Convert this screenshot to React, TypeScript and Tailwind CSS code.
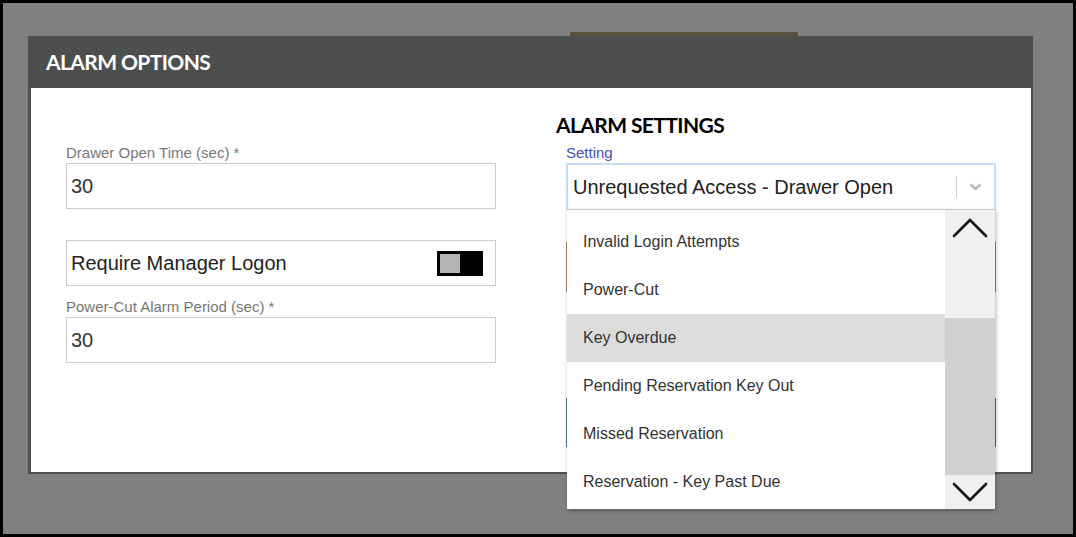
import { useState } from "react";

const SANS = "font-['Liberation_Sans',Arial,sans-serif]";

const OPTIONS = [
  "Invalid Login Attempts",
  "Power-Cut",
  "Key Overdue",
  "Pending Reservation Key Out",
  "Missed Reservation",
  "Reservation - Key Past Due",
];

function Chevron({ up }: { up?: boolean }) {
  return (
    <svg width="36" height="21" viewBox="0 0 36 21" fill="none">
      <polyline
        points={up ? "2,19 18,3 34,19" : "2,2 18,18 34,2"}
        stroke="#111"
        strokeWidth="2.6"
        strokeLinecap="round"
        strokeLinejoin="round"
      />
    </svg>
  );
}

function NumberField({ label, value }: { label: string; value: string }) {
  return (
    <div>
      <div className={`${SANS} text-[15px] leading-[17px] text-[#777]`}>
        {label}
      </div>
      <div
        className={`${SANS} mt-[2px] flex h-[46px] items-center border border-[#cccccc] pl-[4px] text-[20px] text-[#333]`}
      >
        {value}
      </div>
    </div>
  );
}

function SettingSelect() {
  const [hovered] = useState(2);

  return (
    <div className="relative">
      <div
        className={`${SANS} flex h-[48px] items-center border-2 border-[#c6dcf6] bg-white pl-[5px] text-[20px] text-[#222]`}
      >
        <span className="flex-1">Unrequested Access - Drawer Open</span>
        <span className="h-[22px] w-px bg-[#cccccc]" />
        <span className="flex w-[37px] justify-center">
          <svg width="13" height="8" viewBox="0 0 13 8" fill="none">
            <polyline
              points="1.5,1.5 6.5,6 11.5,1.5"
              stroke="#b8b8b8"
              strokeWidth="2.4"
            />
          </svg>
        </span>
      </div>

      {/* open menu, floats over the rest of the modal */}
      <div className="absolute left-[1px] top-[46px] z-10 flex h-[300px] w-[428px] overflow-hidden border-t border-[#cccccc] bg-white shadow-[1px_2px_4px_rgba(0,0,0,0.3)]">
        <ul className="flex-1 pt-[8px]">
          {OPTIONS.map((o, i) => (
            <li
              key={o}
              className={`${SANS} flex h-[48px] items-center pl-[16px] text-[16px] text-[#333] ${
                i === hovered ? "bg-[#dcdcdc]" : ""
              }`}
            >
              {o}
            </li>
          ))}
        </ul>
        <div className="flex w-[50px] flex-col bg-[#f0f0f0]">
          <div className="flex h-[34px] items-center justify-center">
            <Chevron up />
          </div>
          <div className="flex flex-1 flex-col pt-[74px]">
            <div className="flex-1 bg-[#d0d0d0]" />
          </div>
          <div className="flex h-[34px] items-center justify-center">
            <Chevron />
          </div>
        </div>
      </div>
    </div>
  );
}

export default function App() {
  return (
    <div className="h-[537px] w-[1076px] border-[3px] border-black bg-[#808080]">
      <div className="ml-[567px] mt-[29px] h-[4px] w-[228px] bg-[#5e5041]" />
      <div className="ml-[25px] w-[1005px]">
        <div className="flex h-[52px] items-center bg-[#4d4f4e] pl-[18px]">
          <h1 className="font-['Lato',sans-serif] text-[21px] font-bold leading-[26px] tracking-[-0.6px] text-white">
            ALARM OPTIONS
          </h1>
        </div>
        <div className="flex h-[386px] gap-x-[70px] border-b-2 border-l-[3px] border-r-2 border-[#4d4f4e] bg-white pl-[35px] pt-[26px]">
          <div className="w-[430px] pt-[30px]">
            <NumberField label="Drawer Open Time (sec) *" value="30" />
            <div
              className={`${SANS} mt-[31px] flex h-[46px] items-center justify-between border border-[#cccccc] pl-[4px] pr-[12px] text-[20px] text-[#222]`}
            >
              <span>Require Manager Logon</span>
              <span className="flex h-[25px] w-[46px] items-center bg-black pl-[3px]">
                <span className="h-[19px] w-[20px] bg-[#b3b3b3]" />
              </span>
            </div>
            <div className="mt-[12px]">
              <NumberField label="Power-Cut Alarm Period (sec) *" value="30" />
            </div>
          </div>

          <div className="w-[430px]">
            <h2 className="-ml-[10px] font-['Lato',sans-serif] text-[21px] font-bold leading-[22px] tracking-[-0.6px] text-black">
              ALARM SETTINGS
            </h2>
            <div
              className={`${SANS} mt-[8px] text-[15px] leading-[17px] text-[#3f51b5]`}
            >
              Setting
            </div>
            <div className="mt-[2px]">
              <SettingSelect />
            </div>
            {/* controls hidden behind the open menu */}
            <div className="mt-[31px] h-[50px] border border-[#a38a6a]" />
            <div className="mt-[106px] h-[49px] border border-[#4d6f8c]" />
          </div>
        </div>
      </div>
    </div>
  );
}
